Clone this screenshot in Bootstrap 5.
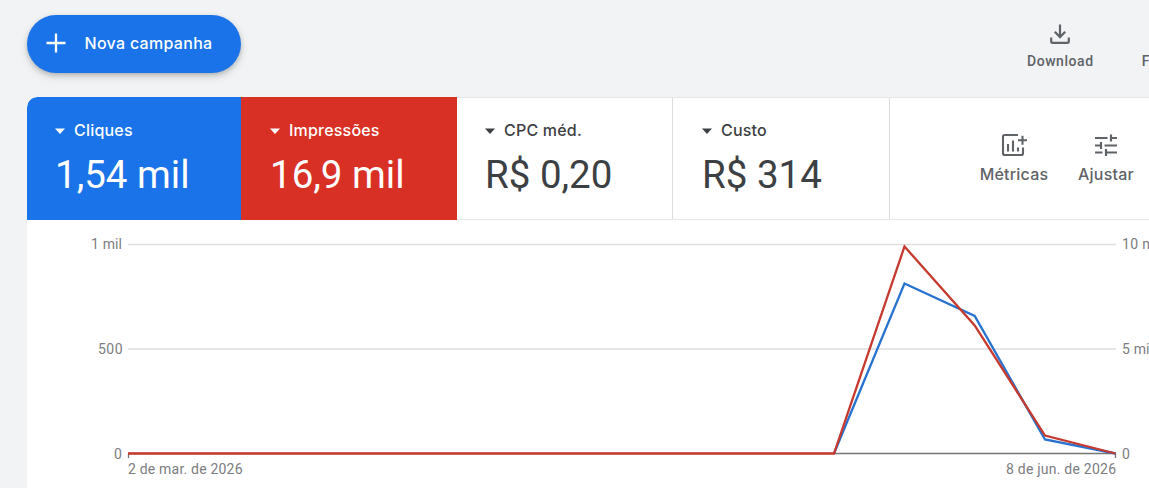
<!DOCTYPE html>
<html lang="pt-BR">
<head>
<meta charset="utf-8">
<meta name="viewport" content="width=device-width, initial-scale=1">
<title>Campanhas</title>
<link href="https://cdn.jsdelivr.net/npm/bootstrap@5.3.0/dist/css/bootstrap.min.css" rel="stylesheet">
<style>
body{background:#f1f3f4;font-family:Roboto,"Liberation Sans",sans-serif;color:#3c4043;height:488px}
.topbar{height:97px;padding:15px 0 0 26.500px}
.new-btn{width:214.500px;height:57.500px;background:#1a73e8;color:#fff;padding:0 0 1px 19px;font:500 16px/1 Inter,sans-serif;box-shadow:0 2px 4px rgba(60,64,67,.25),0 4px 9px rgba(60,64,67,.15)}
.new-btn:hover{background:#1765cc;color:#fff}
.new-btn span{margin-left:19px;letter-spacing:.3px}
.tool{color:#5f6368;line-height:18px}
.top-tool{font-size:14px;font-weight:500;letter-spacing:.55px;padding-top:8.500px}
.download-tool{margin-left:786px}
.download-tool span{margin-top:8px}
.more-tool{margin-left:48px;padding-top:36.500px}
.panel{margin-left:27px;height:391px;background:#fff;border-radius:10px 0 0 0}
.scores{height:123px;border-top:1px solid #e4e6e8;border-bottom:1px solid #e4e6e8}
.score{width:216px;padding:22px 0 0 28px;border-right:1px solid #dadce0}
.score-blue{width:214px;background:#1a73e8;color:#fff;border:0;margin:-1px 0;padding-top:23px;border-radius:10px 0 0 0}
.score-red{background:#d93025;color:#fff;border:0;margin:-1px 0;padding:23px 0 0 29px}
.score-cost{width:217px;padding-left:29px}
.score-name{font:500 16px/20px Inter,sans-serif;height:20px;letter-spacing:.2px}
.score-name svg{margin-right:9px;margin-top:1px}
.score-value{font-size:38.500px;line-height:46px;margin-top:12px;white-space:nowrap}
.panel-tool{font:500 16px/18px Inter,sans-serif;padding-top:34px;letter-spacing:.2px}
.panel-tool svg{margin-bottom:7px}
.tool-metrics{margin-left:89px;width:70px}
.tool-adjust{margin-left:27px;width:60px}
.plot text{font-family:Roboto,sans-serif;font-size:14px;fill:#7b7d7f}
</style>
</head>
<body class="overflow-hidden">
<header class="topbar d-flex align-items-start overflow-hidden">
  <button class="new-btn btn border-0 rounded-pill d-flex align-items-center flex-shrink-0">
    <svg width="20" height="20" viewBox="0 0 20 20"><path d="M10 .5v19M.5 10h19" stroke="#fff" stroke-width="2.3"/></svg>
    <span>Nova campanha</span>
  </button>
  <div class="tool top-tool download-tool d-flex flex-column align-items-center flex-shrink-0">
    <svg width="20" height="20" viewBox="0 0 20 20" fill="none" stroke="#5f6368" stroke-width="2.2"><path d="M10 .5v12.3M4.8 7.8l5.200 5.300 5.200-5.300M1.200 13.500v3.800q0 1.500 1.500 1.500h14.600q1.500 0 1.500-1.500v-3.800"/></svg>
    <span>Download</span>
  </div>
  <div class="tool top-tool more-tool">F</div>
</header>
<main class="panel overflow-hidden">
  <section class="scores d-flex">
    <div class="score score-blue flex-shrink-0">
      <div class="score-name d-flex align-items-center"><svg width="10" height="6" viewBox="0 0 10 6"><path d="M0 .5h10L5 6z" fill="currentColor"/></svg><span>Cliques</span></div>
      <div class="score-value">1,54 mil</div>
    </div>
    <div class="score score-red flex-shrink-0">
      <div class="score-name d-flex align-items-center"><svg width="10" height="6" viewBox="0 0 10 6"><path d="M0 .5h10L5 6z" fill="currentColor"/></svg><span>Impressões</span></div>
      <div class="score-value">16,9 mil</div>
    </div>
    <div class="score flex-shrink-0">
      <div class="score-name d-flex align-items-center"><svg width="10" height="6" viewBox="0 0 10 6"><path d="M0 .5h10L5 6z" fill="currentColor"/></svg><span>CPC méd.</span></div>
      <div class="score-value">R$ 0,20</div>
    </div>
    <div class="score score-cost flex-shrink-0">
      <div class="score-name d-flex align-items-center"><svg width="10" height="6" viewBox="0 0 10 6"><path d="M0 .5h10L5 6z" fill="currentColor"/></svg><span>Custo</span></div>
      <div class="score-value">R$ 314</div>
    </div>
    <div class="tool panel-tool tool-metrics d-flex flex-column align-items-center">
      <svg width="26" height="26" viewBox="0 0 26 26" fill="none" stroke="#5f6368" stroke-width="2.100"><path d="M17 3H3.800Q2 3 2 4.800V21.200Q2 23 3.800 23H20.200Q22 23 22 21.200V15.500M21.500 3.800v9M17 8.300h9M7 12v7.500M12 8.500V19.500M17 15.500V19.500"/></svg>
      <span>Métricas</span>
    </div>
    <div class="tool panel-tool tool-adjust d-flex flex-column align-items-center">
      <svg width="24" height="26" viewBox="0 0 24 26" fill="none" stroke="#5f6368" stroke-width="2.200"><path d="M1 6h12.500M17 6h6M17 2.500v7M1 13.500h6M10.500 13.500H23M7 10v7M1 20.500h7.500M12 20.500h11M12 17v7"/></svg>
      <span>Ajustar</span>
    </div>
  </section>
  <svg class="plot d-block" width="1122" height="268" viewBox="27 220 1122 268">
    <path d="M128 244.500H1116M128 349H1116" stroke="#dedede" stroke-width="1.500"/>
    <path d="M128 453.500H1115.500V458M128.500 453.500V458" fill="none" stroke="#757575" stroke-width="1.300"/>
    <path d="M834 453.500L904.500 283.500 974.700 316 1045 439.500 1115.500 453.500" fill="none" stroke="#2873d0" stroke-width="2.300"/>
    <path d="M128 453.500H834L904.500 246.500 974.700 325.500 1045 435.500 1115.500 453.500" fill="none" stroke="#c5392e" stroke-width="2.300"/>
    <text x="91" y="249" textLength="31">1 mil</text>
    <text x="98" y="354" textLength="24.500">500</text>
    <text x="114" y="458.500">0</text>
    <text x="128" y="474" textLength="114.500">2 de mar. de 2026</text>
    <text x="1006" y="474" textLength="110">8 de jun. de 2026</text>
    <text x="1122" y="249" textLength="40">10 mil</text>
    <text x="1122" y="354" textLength="31">5 mil</text>
    <text x="1122" y="458.500">0</text>
  </svg>
</main>
<script src="https://cdn.jsdelivr.net/npm/bootstrap@5.3.0/dist/js/bootstrap.bundle.min.js"></script>
</body>
</html>
